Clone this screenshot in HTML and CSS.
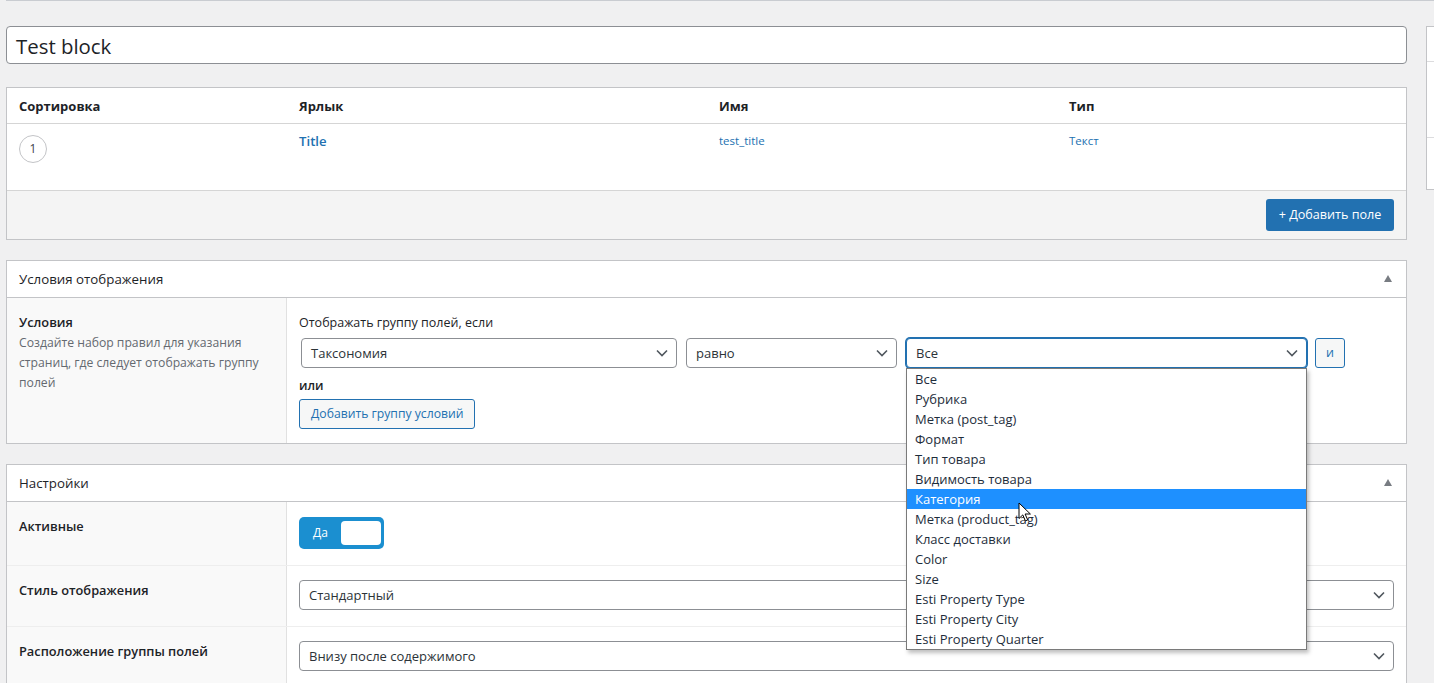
FILE: index.html
```html
<!DOCTYPE html>
<html lang="ru">
<head>
<meta charset="utf-8">
<title>Test block</title>
<link rel="stylesheet" href="styles.css">
</head>
<body>
<div class="topline"></div>
<div class="wrap">
  <main class="main">
    <div class="title-input">Test block</div>

    <section class="fields">
      <div class="fields-head">
        <div class="c1">Сортировка</div>
        <div class="c2">Ярлык</div>
        <div class="c3">Имя</div>
        <div class="c4">Тип</div>
      </div>
      <div class="fields-row">
        <div class="c1"><span class="circle">1</span></div>
        <div class="c2"><a class="field-title">Title</a></div>
        <div class="c3"><span class="small-link">test_title</span></div>
        <div class="c4"><span class="small-link">Текст</span></div>
      </div>
      <div class="fields-foot">
        <span class="btn-primary">+ Добавить поле</span>
      </div>
    </section>

    <section class="postbox">
      <div class="postbox-head">
        <span>Условия отображения</span>
        <span class="tri"></span>
      </div>
      <div class="field-row cond">
        <div class="label-col">
          <div class="label">Условия</div>
          <p class="desc">Создайте набор правил для указания страниц, где следует отображать группу полей</p>
        </div>
        <div class="input-col">
          <div class="cond-title">Отображать группу полей, если</div>
          <div class="rule">
            <div class="select s1">Таксономия<svg class="chev" viewBox="0 0 12 8"><path d="M1 1.5l5 5 5-5" /></svg></div>
            <div class="select s2">равно<svg class="chev" viewBox="0 0 12 8"><path d="M1 1.5l5 5 5-5" /></svg></div>
            <div class="select s3 focus">Все<svg class="chev" viewBox="0 0 12 8"><path d="M1 1.5l5 5 5-5" /></svg>
              <ul class="dropdown">
                <li>Все</li>
                <li>Рубрика</li>
                <li>Метка (post_tag)</li>
                <li>Формат</li>
                <li>Тип товара</li>
                <li>Видимость товара</li>
                <li class="hl">Категория</li>
                <li>Метка (product_tag)</li>
                <li>Класс доставки</li>
                <li>Color</li>
                <li>Size</li>
                <li>Esti Property Type</li>
                <li>Esti Property City</li>
                <li>Esti Property Quarter</li>
              </ul>
              <svg class="cursor" viewBox="0 0 13 20"><path d="M1 1v15.5l3.8-3.6 2.6 6 2.3-1-2.6-5.9h5.3z"/></svg>
            </div>
            <span class="btn-and">и</span>
          </div>
          <div class="or">или</div>
          <span class="btn-sec">Добавить группу условий</span>
        </div>
      </div>
    </section>

    <section class="postbox">
      <div class="postbox-head">
        <span>Настройки</span>
        <span class="tri"></span>
      </div>
      <div class="field-row r1">
        <div class="label-col"><div class="label">Активные</div></div>
        <div class="input-col">
          <div class="switch"><span class="on">Да</span><span class="knob"></span></div>
        </div>
      </div>
      <div class="field-row r2">
        <div class="label-col"><div class="label">Стиль отображения</div></div>
        <div class="input-col">
          <div class="select wide">Стандартный<svg class="chev" viewBox="0 0 12 8"><path d="M1 1.5l5 5 5-5" /></svg></div>
        </div>
      </div>
      <div class="field-row r3">
        <div class="label-col"><div class="label">Расположение группы полей</div></div>
        <div class="input-col">
          <div class="select wide">Внизу после содержимого<svg class="chev" viewBox="0 0 12 8"><path d="M1 1.5l5 5 5-5" /></svg></div>
        </div>
      </div>
    </section>
  </main>

  <aside class="side">
    <div class="side-a"></div>
    <div class="side-b"></div>
    <div class="side-c"></div>
  </aside>
</div>
</body>
</html>
```

FILE: styles.css
```css
* { box-sizing: border-box; }
html, body { margin: 0; padding: 0; }
body {
  background: #f0f0f1;
  font-family: "Open Sans", "Noto Sans", sans-serif;
  font-size: 12.5px;
  line-height: 20px;
  color: #1d2327;
  width: 1434px;
  height: 683px;
  overflow: hidden;
}
.topline {
  height: 2px;
  border-top: 1px solid #c9ccd1;
  margin-left: 6px;
}
.wrap {
  display: flex;
  padding-left: 6px;
  padding-top: 24px;
  overflow: hidden;
}
.main {
  width: 1401px;
  flex: none;
}
.side {
  flex: none;
  width: 280px;
  margin-left: 19px;
  height: 164px;
  background: #fff;
  border: 1px solid #c3c4c7;
  display: flex;
  flex-direction: column;
}
.side-a { height: 35px; border-bottom: 1px solid #dcdcde; }
.side-b { height: 76px; border-bottom: 1px solid #dcdcde; }

.title-input {
  height: 38px;
  border: 1px solid #8c8f94;
  border-radius: 4px;
  background: #fff;
  font-size: 20.4px;
  line-height: 36px;
  padding: 1px 0 0 9px;
  color: #1d2327;
}

.fields {
  margin-top: 23px;
  background: #fff;
  border: 1px solid #c3c4c7;
}
.fields-head, .fields-row { display: flex; }
.fields-head { border-bottom: 1px solid #d5d5d5; height: 36px; }
.fields-head > div {
  font-weight: 700;
  font-size: 13px;
  padding: 8px 12px;
}
.c1 { width: 280px; }
.c2 { width: 420px; }
.c3 { width: 350px; }
.c4 { width: 349px; }
.fields-row { height: 67px; border-bottom: 1px solid #d5d5d5; }
.fields-row > div { padding: 7px 12px; }
.circle {
  display: flex;
  align-items: center;
  justify-content: center;
  width: 28px;
  height: 28px;
  margin-top: 4px;
  border: 1px solid #c3c4c7;
  border-radius: 50%;
  font-size: 12px;
  color: #3c434a;
}
.field-title {
  color: #2271b1;
  font-weight: 600;
  font-size: 13.2px;
}
.small-link { color: #2271b1; font-size: 11.5px; }
.fields-foot {
  background: #f4f4f4;
  height: 48px;
  display: flex;
  justify-content: flex-end;
  align-items: flex-start;
  padding: 8px 12px 0;
}
.btn-primary {
  display: inline-flex;
  align-items: center;
  justify-content: center;
  width: 128px;
  height: 32px;
  background: #2271b1;
  color: #fff;
  border-radius: 3px;
  font-size: 12.6px;
}

.postbox {
  margin-top: 20px;
  background: #fff;
  border: 1px solid #c3c4c7;
}
.postbox-head {
  height: 37px;
  border-bottom: 1px solid #c3c4c7;
  display: flex;
  align-items: center;
  justify-content: space-between;
  padding: 0 14px 0 12px;
  font-size: 13.3px;
}
.tri {
  width: 0; height: 0;
  border-left: 4.5px solid transparent;
  border-right: 4.5px solid transparent;
  border-bottom: 7px solid #787c82;
  margin-top: -2px;
}
.field-row {
  display: flex;
  border-top: 1px solid #eeeeee;
}
.postbox-head + .field-row { border-top: 0; }
.label-col {
  width: 280px;
  flex: none;
  background: #f9f9f9;
  border-right: 1px solid #e1e1e1;
  padding: 14px 12px;
}
.input-col {
  flex: 1;
  padding: 14px 12px 16px;
}
.label { font-weight: 600; font-size: 12.8px; }
.desc { margin: 1px 0 0; color: #646970; font-size: 12.2px; }

.cond .input-col { padding-top: 15px; padding-bottom: 14px; }
.cond-title { margin-bottom: 5px; }
.rule { display: flex; gap: 9px; margin-left: 2px; }
.select {
  position: relative;
  height: 30px;
  border: 1px solid #8c8f94;
  border-radius: 4px;
  background: #fff;
  font-size: 13px;
  line-height: 28px;
  padding-left: 9px;
  color: #2c3338;
}
.chev {
  position: absolute;
  right: 8px;
  top: 10px;
  width: 12px;
  height: 8px;
  fill: none;
  stroke: #50575e;
  stroke-width: 1.6;
}
.s1 { width: 376px; }
.s2 { width: 211px; }
.s3 { width: 401px; }
.focus { border-color: #2271b1; box-shadow: 0 0 0 1px #2271b1; }
.btn-and {
  width: 30px;
  height: 30px;
  margin-left: -1px;
  border: 1px solid #2271b1;
  border-radius: 3px;
  background: #f6f7f7;
  color: #2271b1;
  display: flex;
  align-items: center;
  justify-content: center;
  font-size: 12.5px;
}
.or { margin-top: 8px; font-weight: 600; }
.btn-sec {
  display: inline-flex;
  align-items: center;
  margin-top: 3px;
  height: 30px;
  padding: 0 11px;
  border: 1px solid #2271b1;
  border-radius: 3px;
  background: #f6f7f7;
  color: #2271b1;
  font-size: 12.2px;
}

.dropdown {
  position: absolute;
  z-index: 5;
  left: -1px;
  right: -1px;
  top: 29px;
  margin: 0;
  padding: 0;
  list-style: none;
  background: #fff;
  border: 1px solid #7a7a7a;
  box-shadow: 2px 3px 4px rgba(0,0,0,0.25);
  font-size: 13px;
  line-height: 20px;
  color: #1e2d3b;
}
.dropdown li { padding-left: 8px; height: 20px; }
.dropdown li.hl { background: #1e90ff; color: #fff; }
.cursor {
  position: absolute;
  z-index: 6;
  left: 111px;
  top: 163px;
  width: 13px;
  height: 20px;
  fill: #fff;
  stroke: #000;
  stroke-width: 1;
}

.r1 .input-col { padding-top: 15px; }
.switch {
  position: relative;
  width: 85px;
  height: 32px;
  background: #1b8fd0;
  border-radius: 5px;
  display: flex;
  align-items: center;
}
.switch .on { color: #fff; font-size: 12px; padding-left: 14px; }
.switch .knob {
  position: absolute;
  right: 3px;
  top: 4px;
  width: 40px;
  height: 24px;
  background: #fff;
  border-radius: 4px;
}
.wide { width: 1095px; }
```
